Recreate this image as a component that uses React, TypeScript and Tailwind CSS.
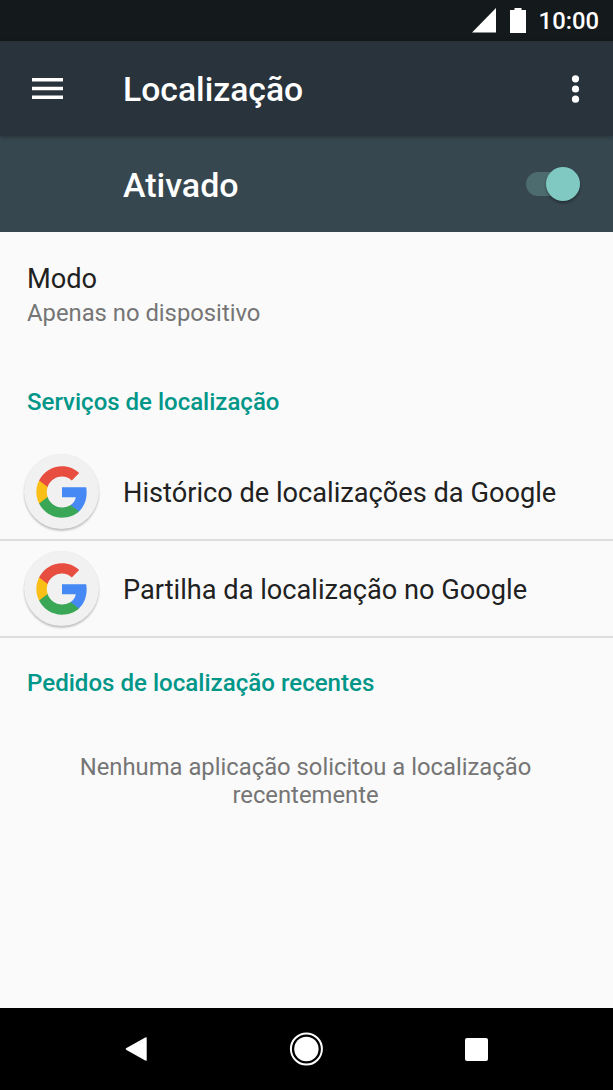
const services = [
  { title: "Histórico de localizações da Google" },
  { title: "Partilha da localização no Google" },
];

const GoogleIcon = () => (
  <div className="flex h-[75px] w-[75px] shrink-0 items-center justify-center rounded-full bg-[#f1f1f1] shadow-[0_2px_2px_rgba(0,0,0,0.22),0_0_1px_rgba(0,0,0,0.08)]">
    <svg viewBox="0 0 24 24" className="h-14 w-14">
      <path
        fill="#4688f4"
        d="M22.56 12.25c0-.78-.07-1.53-.2-2.25H12v4.26h5.92c-.26 1.37-1.04 2.53-2.21 3.31v2.77h3.57c2.08-1.92 3.28-4.74 3.28-8.09z"
      />
      <path
        fill="#3aa757"
        d="M12 23c2.97 0 5.46-.98 7.28-2.66l-3.57-2.77c-.98.66-2.23 1.06-3.71 1.06-2.86 0-5.29-1.93-6.16-4.53H2.18v2.84C3.99 20.53 7.7 23 12 23z"
      />
      <path
        fill="#f9bf16"
        d="M5.84 14.09c-.22-.66-.35-1.36-.35-2.09s.13-1.43.35-2.09V7.07H2.18C1.43 8.55 1 10.22 1 12s.43 3.45 1.18 4.93l3.66-2.84z"
      />
      <path
        fill="#e84e40"
        d="M12 5.38c1.62 0 3.06.56 4.21 1.64l3.15-3.15C17.45 2.09 14.97 1 12 1 7.7 1 3.99 3.47 2.18 7.07l3.66 2.84c.87-2.6 3.3-4.53 6.16-4.53z"
      />
    </svg>
  </div>
);

const StatusBar = () => (
  <div className="flex h-[41px] items-center justify-end bg-[#14191c] pr-[14px] text-white">
    <svg viewBox="0 0 24 25" className="mr-[14px] h-[25px] w-6" fill="currentColor">
      <path d="M24 0v24.5H0z" />
    </svg>
    <svg viewBox="0 0 16 25" className="mr-[13px] h-[25px] w-4" fill="currentColor">
      <path d="M4.5 0h7v2H16v23H0V2h4.5z" />
    </svg>
    <span className="pt-[3px] text-[23.8px] leading-none font-medium">10:00</span>
  </div>
);

const AppBar = () => (
  <header className="relative z-10 flex h-[95px] items-center bg-[#28333b] pr-[33px] pl-8 text-white shadow-[0_1px_4px_rgba(0,0,0,0.3)]">
    <svg viewBox="0 0 31 21" className="h-[21px] w-[31px]" fill="currentColor">
      <path d="M0 0h31v3.5H0zM0 8.75h31v3.5H0zM0 17.5h31V21H0z" />
    </svg>
    <h1 className="ml-[60px] flex-1 pt-[3px] text-[33.7px] leading-10 font-medium">
      Localização
    </h1>
    <svg viewBox="0 0 9 28" className="h-7 w-[9px]" fill="currentColor">
      <circle cx="4.5" cy="3.8" r="3.6" />
      <circle cx="4.5" cy="14" r="3.6" />
      <circle cx="4.5" cy="24.2" r="3.6" />
    </svg>
  </header>
);

const SwitchBar = () => (
  <div className="flex h-24 items-center justify-between bg-[#37474f] pr-[33px] pl-[123px] text-white">
    <span className="pt-px text-[34px] leading-10 font-medium">Ativado</span>
    <div className="flex h-6 w-[54px] items-center justify-end rounded-full bg-[#4d6c6f]">
      <div className="h-[34px] w-[34px] shrink-0 rounded-full bg-[#80c8c2] shadow-[0_2px_3px_rgba(0,0,0,0.35)]" />
    </div>
  </div>
);

const NavBar = () => (
  <nav className="flex h-[82px] items-center justify-center bg-black text-white">
    <svg viewBox="0 0 22 24" className="h-6 w-[22px]" fill="currentColor">
      <path d="M20.7.2 1.5 11q-1.6 1 0 2l19.2 10.8q1 .3 1-.7V.9q0-1-1-.7z" />
    </svg>
    <svg viewBox="0 0 34 34" className="mx-[142px] h-[34px] w-[34px]">
      <circle cx="17.4" cy="17" r="15.5" fill="none" stroke="currentColor" strokeWidth="2" />
      <circle cx="17.4" cy="17" r="12.2" fill="currentColor" />
    </svg>
    <div className="h-[23px] w-[23px] rounded-[2px] bg-white" />
  </nav>
);

const App = () => {
  return (
    <div className="flex h-[1090px] w-[613px] flex-col overflow-hidden bg-[#fafafa] font-[Roboto,sans-serif] text-[#212121]">
      <StatusBar />
      <AppBar />
      <SwitchBar />

      <main className="flex-1">
        <div className="px-[27px] pt-[31px]">
          <p className="text-[27.2px] leading-8">Modo</p>
          <p className="mt-1 text-[23.8px] leading-7 text-[#757575]">
            Apenas no dispositivo
          </p>
        </div>

        <h2 className="mt-[61px] px-[27px] text-[24px] leading-7 font-medium text-[#009688]">
          Serviços de localização
        </h2>
        <ul className="mt-7">
          {services.map((item) => (
            <li
              key={item.title}
              className="flex h-[97px] items-center border-b-2 border-[#dedede] pl-[24px]"
            >
              <GoogleIcon />
              <span className="ml-6 pt-[3px] text-[27.2px] leading-8">
                {item.title}
              </span>
            </li>
          ))}
        </ul>

        <h2 className="mt-[31px] px-[27px] text-[24.1px] leading-7 font-medium text-[#009688]">
          Pedidos de localização recentes
        </h2>
        <p className="mt-14 pr-[61px] pl-[59px] text-center text-[23.8px] leading-7 text-[#757575]">
          Nenhuma aplicação solicitou a localização recentemente
        </p>
      </main>

      <NavBar />
    </div>
  );
};

export default App;
